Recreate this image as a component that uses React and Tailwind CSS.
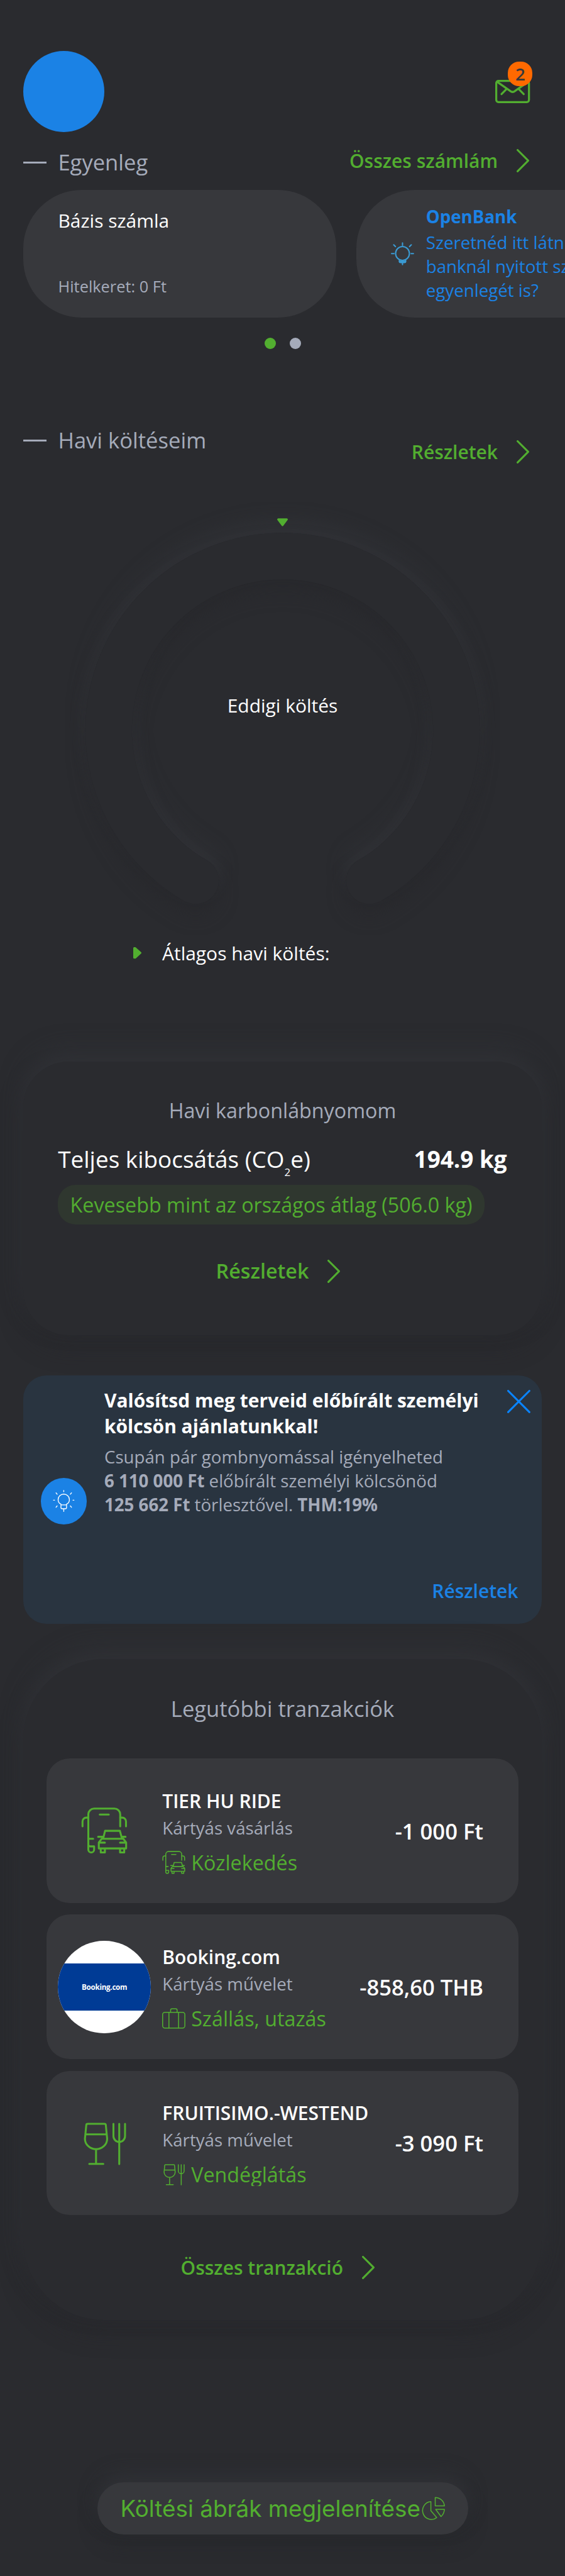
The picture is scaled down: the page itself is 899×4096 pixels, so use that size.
const GREEN = '#52ae30';

function Chevron() {
  return (
    <svg viewBox="0 0 26 48" className="h-[36.9px] w-[20px] shrink-0" fill="none" stroke={GREEN} strokeWidth="4" strokeLinecap="round" strokeLinejoin="round">
      <path d="M2 2L24 24L2 46" />
    </svg>
  );
}

function MailIcon() {
  return (
    <svg viewBox="0 0 72 48" className="h-[36.9px] w-[55.3px]" fill="none" stroke={GREEN} strokeWidth="4.2" strokeLinecap="round" strokeLinejoin="round">
      <rect x="2.1" y="2.1" width="67.8" height="43.8" rx="4.5" />
      <path d="M4 4L31 23Q36 27 41 23L68 4M23.3 19L13 29.3M48.7 19L59 29.3" />
    </svg>
  );
}

function BulbIcon() {
  return (
    <svg viewBox="0 0 48 48" className="size-[36.9px] shrink-0" fill="none" stroke="#3a9bd4" strokeWidth="2.7" strokeLinecap="round" strokeLinejoin="round">
      <circle cx="24" cy="23.5" r="14.3" />
      <path d="M24 1.6V6.4M1.4 23.7H6.4M41.8 23.7H46.6M5.8 5.6L9.4 9.2M42.2 5.6L38.6 9.2M17.4 38V40.5Q17.6 42.4 20 42.4H28Q30.4 42.4 30.6 40.5V38M19 39.8H29M24 43V46.6" />
    </svg>
  );
}

function TransportIcon({ className }) {
  return (
    <svg viewBox="0 0 96 96" className={className} fill="none" stroke={GREEN} strokeWidth="4" strokeLinecap="round" strokeLinejoin="round">
      <path d="M81 39V14A12 12 0 0 0 69 2.3H27A12 12 0 0 0 15 14V87A6 6 0 0 0 27 87V80.5H19A4 4 0 0 1 15 76.5M15 64.7H25M38.7 14.7H57.3" />
      <path d="M15 21H11A8 8 0 0 0 3 29V39M81 21H85A8 8 0 0 1 93 29V39" />
      <path d="M46 63L49.7 48.3H80.3L84.3 63M35.3 60.7H46M84.3 60.7H92M42.7 64.7H87.3L93.3 72.3V84.7H36.7V72.3ZM38.7 72.7H49.3M80.7 72.7H91.3M40.7 85V93H49.3V85M80.7 85V93H89.3V85" />
    </svg>
  );
}

function DiningIcon({ className }) {
  return (
    <svg viewBox="0 0 96 96" className={className} fill="none" stroke={GREEN} strokeWidth="4" strokeLinecap="round" strokeLinejoin="round">
      <path d="M13.5 7.7H48.5Q51 7.7 51.2 10.2L54 38.7A23 21.6 0 0 1 8 38.7L10.8 10.2Q11 7.7 13.5 7.7ZM9.7 29.7H52.3M31 60.3V90.7M17 90.7H46" />
      <path d="M67 7.7V33.3A12 12 0 0 0 91 33.3V7.7M79 7.7V91" />
    </svg>
  );
}

function SuitcaseIcon({ className }) {
  return (
    <svg viewBox="0 0 96 96" className={className} fill="none" stroke={GREEN} strokeWidth="4" strokeLinecap="round" strokeLinejoin="round">
      <rect x="2" y="23" width="92" height="65" rx="9" />
      <path d="M28 23V88M68 23V88M35 23V14Q35 8 41 8H56Q62 8 62 14V23" />
    </svg>
  );
}

function SectionTitle({ children }) {
  return (
    <div className="flex items-center">
      <span className="h-[3px] w-[37px] bg-[#a5abba]" />
      <h2 className="ml-[18.4px] text-[34.58px] leading-[40px] text-[#a5abba]">{children}</h2>
    </div>
  );
}

function MoreLink({ children, className = '' }) {
  return (
    <a className={`flex items-center gap-[30px] text-[29.97px] leading-[40px] font-semibold text-[#52ae30] ${className}`}>
      {children}
      <Chevron />
    </a>
  );
}

const transactions = [
  { icon: 'transport', title: 'TIER HU RIDE', type: 'Kártyás vásárlás', category: 'Közlekedés', amount: '-1 000 Ft' },
  { icon: 'booking', title: 'Booking.com', type: 'Kártyás művelet', category: 'Szállás, utazás', amount: '-858,60 THB' },
  { icon: 'dining', title: 'FRUITISIMO.-WESTEND', type: 'Kártyás művelet', category: 'Vendéglátás', amount: '-3 090 Ft' },
];

const icons = { transport: TransportIcon, booking: SuitcaseIcon, dining: DiningIcon };

function Transaction({ item }) {
  const Icon = icons[item.icon];
  return (
    <li className="flex h-[229.7px] items-center rounded-[37px] bg-[#37383c] pr-[56px] pl-[18.4px]">
      {item.icon === 'booking' ? (
        <div className="flex size-[147.5px] flex-col justify-center overflow-hidden rounded-full bg-white">
          <div className="flex h-[75.3px] items-center justify-center bg-[#003b95] text-[11.7px] font-bold tracking-[-0.3px] text-white">
            Booking.com
          </div>
        </div>
      ) : (
        <div className="flex size-[147.5px] items-center justify-center">
          <Icon className="size-[73.8px]" />
        </div>
      )}
      <div className="ml-[18.4px] h-full flex-1 pt-[47.8px]">
        <div className="text-[29.97px] leading-[40px] font-semibold whitespace-nowrap text-white">{item.title}</div>
        <div className="mt-[2.3px] text-[27.66px] leading-[38px] text-[#a5abba]">{item.type}</div>
        <div className="mt-[18.6px] flex h-[36.9px] gap-[9px] overflow-hidden">
          <Icon className="size-[36.9px]" />
          <span className="text-[32.27px] leading-[37.6px] whitespace-nowrap text-[#52ae30]">{item.category}</span>
        </div>
      </div>
      <div className="pt-[2px] text-[34.58px] leading-[44px] font-semibold whitespace-nowrap text-white">{item.amount}</div>
    </li>
  );
}

export default function App() {
  return (
    <main className="flex h-[4096px] w-[899px] flex-col overflow-hidden bg-[#2a2b2f] font-['Open_Sans',sans-serif]">
      <header className="flex h-[209.8px] shrink-0 items-start justify-between pt-[80.7px] pr-[55.3px] pl-[37px]">
        <div className="size-[129px] rounded-full bg-[#1b82e5]" />
        <div className="relative mt-[46px]">
          <MailIcon />
          <span className="absolute -top-[28.4px] left-[20px] flex size-[39px] items-center justify-center rounded-[18px] bg-[#ff6900] text-[27.66px] leading-none font-semibold text-[#37383c]">
            2
          </span>
        </div>
      </header>

      <div className="flex h-[92.2px] shrink-0 items-center justify-between pr-[57px] pl-[37px]">
        <div className="pt-[5px]">
          <SectionTitle>Egyenleg</SectionTitle>
        </div>
        <MoreLink>Összes számlám</MoreLink>
      </div>

      <section className="flex shrink-0 gap-[32.3px] overflow-hidden pl-[37px]">
        <article className="flex h-[202.7px] w-[497.9px] shrink-0 flex-col justify-between rounded-[93px] bg-[#37383c] pt-[28.8px] pb-[32.2px] pl-[55.5px]">
          <h3 className="text-[29.97px] leading-[40px] text-white">Bázis számla</h3>
          <p className="text-[25.36px] leading-[34px] text-[#a5abba]">Hitelkeret: 0 Ft</p>
        </article>
        <article className="flex h-[202.7px] w-[497.9px] shrink-0 items-center gap-[18.4px] rounded-[93px] bg-[#37383c] pl-[55.3px]">
          <BulbIcon />
          <div className="text-[27.66px] leading-[37.65px] whitespace-nowrap text-[#1b82e5]">
            <h3 className="mb-[3.4px] font-bold">OpenBank</h3>
            <p>
              Szeretnéd itt látni más
              <br />
              banknál nyitott számlád
              <br />
              egyenlegét is?
            </p>
          </div>
        </article>
      </section>

      <div className="mt-[32.2px] flex shrink-0 justify-center gap-[22px]">
        <span className="size-[18px] rounded-full bg-[#52ae30]" />
        <span className="size-[18px] rounded-full bg-[#a5abba]" />
      </div>

      <div className="mt-[125.5px] flex h-[118.7px] shrink-0 items-start justify-between pr-[57px] pl-[37px]">
        <SectionTitle>Havi költéseim</SectionTitle>
        <MoreLink className="mt-[18.5px]">Részletek</MoreLink>
      </div>

      <section className="grid h-[691.5px] shrink-0">
        <svg viewBox="0 1040 1170 900" className="h-[691.5px] w-[899px] [grid-area:1/1]">
          <defs>
            <filter id="relief" x="-20%" y="-20%" width="140%" height="140%" colorInterpolationFilters="sRGB">
              <feDropShadow dx="0" dy="-24" stdDeviation="18" floodColor="#34353a" floodOpacity="0.6" result="light" />
              <feDropShadow in="SourceGraphic" dx="0" dy="24" stdDeviation="18" floodColor="#252629" floodOpacity="0.5" result="dark" />
              <feMerge>
                <feMergeNode in="light" />
                <feMergeNode in="dark" />
                <feMergeNode in="SourceGraphic" />
              </feMerge>
            </filter>
          </defs>
          <path d="M405 1822.8A360 360 0 1 1 765 1822.8" fill="none" stroke="#2a2b2f" strokeWidth="96" strokeLinecap="round" filter="url(#relief)" />
          <path d="M576 1075H594L585 1087Z" fill={GREEN} stroke={GREEN} strokeWidth="4" strokeLinejoin="round" />
        </svg>
        <p className="mt-[303px] text-center text-[29.97px] leading-[40px] text-white [grid-area:1/1]">Eddigi költés</p>
      </section>

      <div className="mt-[5px] flex shrink-0 items-center pl-[212px]">
        <svg viewBox="0 0 17 24" className="h-[18.4px] w-[13px]">
          <path d="M2 2H4L15 12L4 22H2Z" fill={GREEN} stroke={GREEN} strokeWidth="4" strokeLinejoin="round" />
        </svg>
        <p className="ml-[33px] text-[29.97px] leading-[40px] text-white">Átlagos havi költés:</p>
      </div>

      <section className="mx-[37px] mt-[152.1px] flex h-[434.9px] shrink-0 flex-col rounded-[72px] bg-[#2a2b2f] px-[55.3px] pt-[56px] shadow-[0_-18px_36px_rgba(52,53,58,0.6),0_18px_36px_rgba(37,38,41,0.5)]">
        <h2 className="text-center text-[32.27px] leading-[44px] text-[#a5abba]">Havi karbonlábnyomom</h2>
        <div className="mt-[30.6px] flex h-[50px] justify-between text-[36.88px] leading-[50px] whitespace-nowrap text-white">
          <p>
            Teljes kibocsátás (CO
            <span className="relative top-[12.5px] text-[17px] leading-none">2</span>
            e)
          </p>
          <p className="font-bold">194.9 kg</p>
        </div>
        <div className="mt-[16.1px] flex h-[62.8px] w-[678.5px] items-center justify-center rounded-[28px] bg-[#2f372f] text-[32.27px] whitespace-nowrap text-[#52ae30]">
          Kevesebb mint az országos átlag (506.0 kg)
        </div>
        <a className="mt-[52px] flex items-center justify-center gap-[30px] pr-[14px] text-[32.27px] leading-[44px] font-semibold text-[#52ae30]">
          Részletek
          <Chevron />
        </a>
      </section>

      <section className="mx-[37px] mt-[64.6px] flex h-[394.9px] shrink-0 flex-col justify-between rounded-[37px] bg-[#293440]">
        <div className="flex items-start pl-[27.7px]">
          <div className="mt-[163px] flex size-[73.8px] items-center justify-center rounded-full bg-[#1b82e5]">
            <svg viewBox="0 0 48 48" className="size-[36.9px]" fill="none" stroke="#fff" strokeWidth="1.8" strokeLinecap="round" strokeLinejoin="round">
              <path d="M18.200 31V29.500C13.800 27.500 12.300 23.500 12.300 20.200A11.700 11.400 0 0 1 35.700 20.200C35.700 23.500 34.200 27.500 29.800 29.500V31V36.500Q29.800 39 27.300 39H20.700Q18.200 39 18.200 36.500ZM18.200 31H29.800M24 1.300V3.800M24 39.500V44.500M2.800 21.300H5M43 21.300H45.200M8 6.200L10.300 9M40 6.200L37.700 9M8 36L10.300 33.200M40 36L37.700 33.200" />
            </svg>
          </div>
          <div className="mt-[19.6px] ml-[27.5px] whitespace-nowrap">
            <h3 className="text-[29.97px] leading-[40.9px] font-bold text-white">
              Valósítsd meg terveid előbírált személyi
              <br />
              kölcsön ajánlatunkkal!
            </h3>
            <p className="mt-[9.8px] text-[27.66px] leading-[37.65px] text-[#a5abba]">
              Csupán pár gombnyomással igényelheted
              <br />
              <b>6 110 000 Ft</b> előbírált személyi kölcsönöd
              <br />
              <b>125 662 Ft</b> törlesztővel. <b>THM:19%</b>
            </p>
          </div>
          <svg viewBox="0 0 48 48" className="mt-[23px] mr-[18.4px] ml-auto size-[36.9px]" fill="none" stroke="#0a84ff" strokeWidth="4" strokeLinecap="round">
            <path d="M2 2L46 46M46 2L2 46" />
          </svg>
        </div>
        <a className="self-end pr-[37.5px] pb-[32.2px] text-[29.97px] leading-[40px] font-semibold text-[#1b82e5]">Részletek</a>
      </section>

      <section className="mx-[37px] mt-[56.1px] flex h-[1050.4px] shrink-0 flex-col rounded-[128px] bg-[#2a2b2f] px-[37px] pt-[56px] shadow-[0_-18px_36px_rgba(52,53,58,0.6),0_18px_36px_rgba(37,38,41,0.5)]">
        <h2 className="text-center text-[34.58px] leading-[46px] text-[#a5abba]">Legutóbbi tranzakciók</h2>
        <ul className="mt-[56.3px] flex flex-col gap-[18.4px]">
          {transactions.map((item) => (
            <Transaction key={item.title} item={item} />
          ))}
        </ul>
        <MoreLink className="mt-[63.5px] justify-center pr-[15.5px]">Összes tranzakció</MoreLink>
      </section>

      <button className="mt-[258.2px] flex h-[83px] w-[590px] shrink-0 items-center justify-between self-center rounded-[41.5px] bg-[#37383c] px-[36.9px] font-['Inter',sans-serif] text-[36.88px] whitespace-nowrap text-[#52ae30] shadow-[0_-14px_28px_rgba(52,53,58,0.6),0_14px_28px_rgba(37,38,41,0.6)]">
        Költési ábrák megjelenítése
        <svg viewBox="0 0 48 48" className="size-[36.9px] shrink-0" fill="none" stroke={GREEN} strokeWidth="2" strokeLinejoin="round">
          <path d="M19 10A18 18.5 0 1 0 31 43L19 29ZM28 1.5A19 19 0 0 1 47 19H28ZM29 26H47Q46.5 35 40 41Z" />
        </svg>
      </button>
    </main>
  );
}
